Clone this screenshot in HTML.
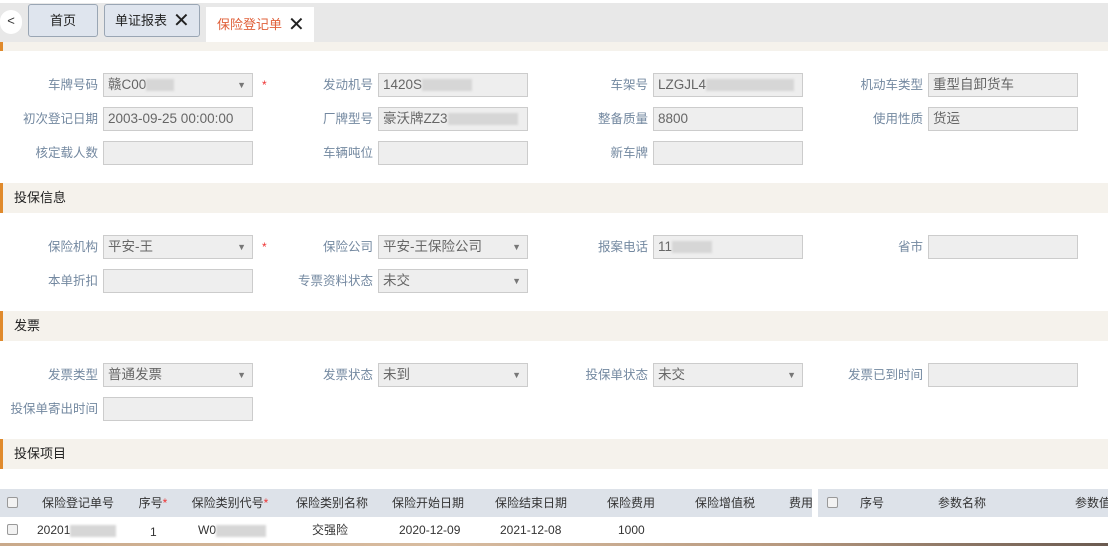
<!DOCTYPE html>
<html><head><meta charset="utf-8"><style>
*{margin:0;padding:0;box-sizing:border-box}
body{width:1108px;height:546px;position:relative;overflow:hidden;background:#fff;font-family:"Liberation Sans","Noto Sans CJK SC",sans-serif;font-size:12px;color:#333}
.a{position:absolute}
.tabbar{left:0;top:3px;width:1108px;height:39px;background:#e8e8e8}
.tab{position:absolute;top:4px;height:33px;border:1px solid #9aa6b4;border-radius:3px;background:#dfe5ee;font-size:13px;color:#222;line-height:31px}
.band{left:0;width:1108px;height:30px;background:#f5f2ec;border-left:3px solid #e08a2c;font-size:13px;line-height:30px;padding-left:11px;color:#222}
.lb{width:98px;text-align:right;color:#7388a0;font-size:12.5px;line-height:24px;height:24px}
.in{width:150px;height:24px;background:#eee;border:1px solid #ccc;font-size:13.5px;color:#666;line-height:22px;padding-left:4px;white-space:nowrap;overflow:hidden}
.in .ar{position:absolute;right:6px;top:0;font-size:9px;color:#777}
.star{color:#e33;font-size:12px}
.blur{display:inline-block;height:12px;background:#d6d6d6;vertical-align:middle;filter:blur(1px)}
.th{top:489px;height:28px;background:#dde2e9;line-height:28px;font-size:12px;color:#333}
.cb{position:absolute;width:11px;height:11px;border:1px solid #999;border-radius:2px;background:#f2f2f2}
</style></head><body>
<div class="a tabbar"></div>
<div class="a" style="left:0;top:10px;width:22px;height:24px;background:#fff;border-radius:12px;font-size:13px;line-height:22px;text-align:center">&lt;</div>
<div class="tab" style="left:28px;width:70px;text-align:center">首页</div>
<div class="tab" style="left:104px;width:96px;padding-left:10px">单证报表<span style="position:absolute;left:68px;top:1px;font-size:20px">✕</span></div>
<div class="a" style="left:206px;top:7px;width:108px;height:35px;background:#fff;font-size:13px;color:#e0603a;line-height:35px;padding-left:11px">保险登记单<span style="position:absolute;left:82px;top:1px;font-size:20px;color:#222">✕</span></div>
<div class="a" style="left:0;top:42px;width:1108px;height:9px;background:#f5f2ec;border-left:3px solid #e08a2c"></div>

<div class="a lb" style="left:0;top:73px">车牌号码</div>
<div class="a in" style="left:103px;top:73px">赣C00<span class="blur" style="width:28px"></span><span class="ar">▼</span></div>
<div class="a star" style="left:262px;top:78px">*</div>
<div class="a lb" style="left:275px;top:73px">发动机号</div>
<div class="a in" style="left:378px;top:73px">1420S<span class="blur" style="width:50px"></span></div>
<div class="a lb" style="left:550px;top:73px">车架号</div>
<div class="a in" style="left:653px;top:73px">LZGJL4<span class="blur" style="width:88px"></span></div>
<div class="a lb" style="left:825px;top:73px">机动车类型</div>
<div class="a in" style="left:928px;top:73px">重型自卸货车</div>
<div class="a lb" style="left:0;top:107px">初次登记日期</div>
<div class="a in" style="left:103px;top:107px">2003-09-25 00:00:00</div>
<div class="a lb" style="left:275px;top:107px">厂牌型号</div>
<div class="a in" style="left:378px;top:107px">豪沃牌ZZ3<span class="blur" style="width:70px"></span></div>
<div class="a lb" style="left:550px;top:107px">整备质量</div>
<div class="a in" style="left:653px;top:107px">8800</div>
<div class="a lb" style="left:825px;top:107px">使用性质</div>
<div class="a in" style="left:928px;top:107px">货运</div>
<div class="a lb" style="left:0;top:141px">核定载人数</div>
<div class="a in" style="left:103px;top:141px"></div>
<div class="a lb" style="left:275px;top:141px">车辆吨位</div>
<div class="a in" style="left:378px;top:141px"></div>
<div class="a lb" style="left:550px;top:141px">新车牌</div>
<div class="a in" style="left:653px;top:141px"></div>

<div class="a band" style="top:183px">投保信息</div>
<div class="a lb" style="left:0;top:235px">保险机构</div>
<div class="a in" style="left:103px;top:235px">平安-王<span class="ar">▼</span></div>
<div class="a star" style="left:262px;top:240px">*</div>
<div class="a lb" style="left:275px;top:235px">保险公司</div>
<div class="a in" style="left:378px;top:235px">平安-王保险公司<span class="ar">▼</span></div>
<div class="a lb" style="left:550px;top:235px">报案电话</div>
<div class="a in" style="left:653px;top:235px">11<span class="blur" style="width:40px"></span></div>
<div class="a lb" style="left:825px;top:235px">省市</div>
<div class="a in" style="left:928px;top:235px"></div>
<div class="a lb" style="left:0;top:269px">本单折扣</div>
<div class="a in" style="left:103px;top:269px"></div>
<div class="a lb" style="left:275px;top:269px">专票资料状态</div>
<div class="a in" style="left:378px;top:269px">未交<span class="ar">▼</span></div>

<div class="a band" style="top:311px">发票</div>
<div class="a lb" style="left:0;top:363px">发票类型</div>
<div class="a in" style="left:103px;top:363px">普通发票<span class="ar">▼</span></div>
<div class="a lb" style="left:275px;top:363px">发票状态</div>
<div class="a in" style="left:378px;top:363px">未到<span class="ar">▼</span></div>
<div class="a lb" style="left:550px;top:363px">投保单状态</div>
<div class="a in" style="left:653px;top:363px">未交<span class="ar">▼</span></div>
<div class="a lb" style="left:825px;top:363px">发票已到时间</div>
<div class="a in" style="left:928px;top:363px"></div>
<div class="a lb" style="left:0;top:397px">投保单寄出时间</div>
<div class="a in" style="left:103px;top:397px"></div>

<div class="a band" style="top:439px">投保项目</div>

<div class="a th" style="left:0;width:812px"></div>
<div class="a th" style="left:818px;width:290px"></div>
<div class="cb" style="left:7px;top:497px"></div>
<div class="a" style="left:28px;top:489px;line-height:28px;width:100px;text-align:center">保险登记单号</div>
<div class="a" style="left:130px;top:489px;line-height:28px;width:46px;text-align:center">序号<span class="star">*</span></div>
<div class="a" style="left:180px;top:489px;line-height:28px;width:100px;text-align:center">保险类别代号<span class="star">*</span></div>
<div class="a" style="left:290px;top:489px;line-height:28px;width:84px;text-align:center">保险类别名称</div>
<div class="a" style="left:386px;top:489px;line-height:28px;width:84px;text-align:center">保险开始日期</div>
<div class="a" style="left:489px;top:489px;line-height:28px;width:84px;text-align:center">保险结束日期</div>
<div class="a" style="left:600px;top:489px;line-height:28px;width:62px;text-align:center">保险费用</div>
<div class="a" style="left:690px;top:489px;line-height:28px;width:70px;text-align:center">保险增值税</div>
<div class="a" style="left:789px;top:489px;line-height:28px;width:23px;overflow:hidden;white-space:nowrap">费用</div>
<div class="cb" style="left:827px;top:497px"></div>
<div class="a" style="left:860px;top:489px;line-height:28px">序号</div>
<div class="a" style="left:938px;top:489px;line-height:28px">参数名称</div>
<div class="a" style="left:1075px;top:489px;line-height:28px;white-space:nowrap">参数值</div>

<div class="cb" style="left:7px;top:524px"></div>
<div class="a" style="left:37px;top:517px;line-height:26px">20201<span class="blur" style="width:46px"></span></div>
<div class="a" style="left:150px;top:519px;line-height:26px">1</div>
<div class="a" style="left:198px;top:517px;line-height:26px">W0<span class="blur" style="width:50px"></span></div>
<div class="a" style="left:312px;top:517px;line-height:26px">交强险</div>
<div class="a" style="left:399px;top:517px;line-height:26px">2020-12-09</div>
<div class="a" style="left:500px;top:517px;line-height:26px">2021-12-08</div>
<div class="a" style="left:618px;top:517px;line-height:26px">1000</div>
<div class="a" style="left:0;top:543px;width:1108px;height:3px;background:linear-gradient(90deg,#c9a98a,#d8bca0 40%,#b89a80 70%,#6a5a50)"></div>
</body></html>
